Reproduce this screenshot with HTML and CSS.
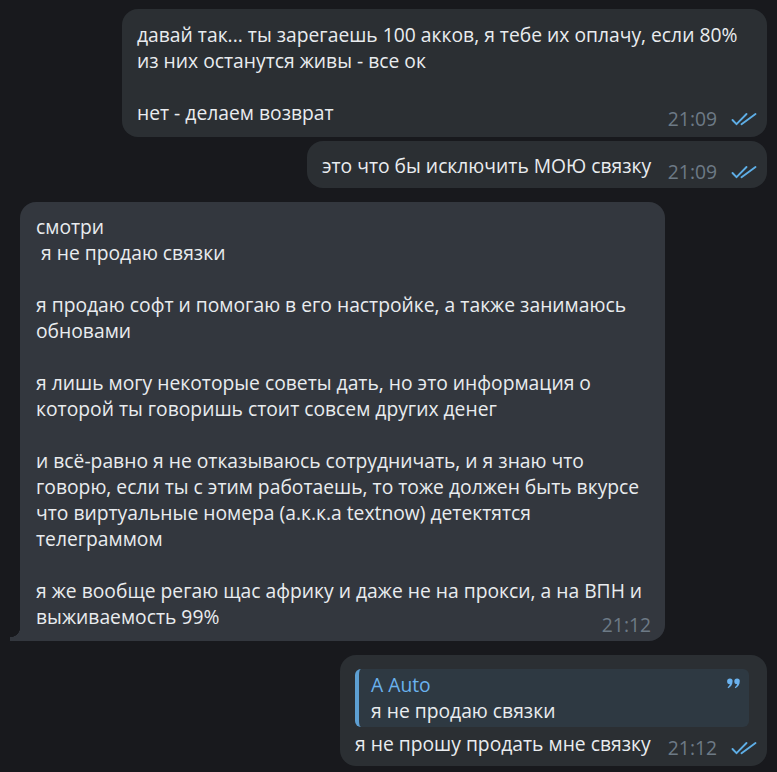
FILE: index.html
```html
<!DOCTYPE html>
<html lang="ru">
<head>
<meta charset="utf-8">
<link rel="stylesheet" href="styles.css">
</head>
<body>
<div class="chat">
  <div class="row out first">
    <div class="bubble out-bubble w1">
      <div class="text">давай так... ты зарегаешь 100 акков, я тебе их оплачу, если 80%<br>из них останутся живы - все ок<br><br>нет - делаем возврат</div>
      <div class="meta"><span class="time">21:09</span><svg class="check" viewBox="0 0 26 14" width="26" height="14"><path d="M1.5 8l4 4.2L15.5 2M10.5 12.2L24.5 2" fill="none" stroke="#5eaee6" stroke-width="1.9" stroke-linecap="round" stroke-linejoin="round"/></svg></div>
    </div>
  </div>
  <div class="row out">
    <div class="bubble out-bubble w2">
      <div class="text">это что бы исключить МОЮ связку</div>
      <div class="meta"><span class="time">21:09</span><svg class="check" viewBox="0 0 26 14" width="26" height="14"><path d="M1.5 8l4 4.2L15.5 2M10.5 12.2L24.5 2" fill="none" stroke="#5eaee6" stroke-width="1.9" stroke-linecap="round" stroke-linejoin="round"/></svg></div>
    </div>
  </div>
  <div class="row in">
    <div class="bubble in-bubble w3">
      <div class="text">смотри<br>&nbsp;я не продаю связки<br><br>я продаю софт и помогаю в его настройке, а также занимаюсь<br>обновами<br><br>я лишь могу некоторые советы дать, но это информация о<br>которой ты говоришь стоит совсем других денег<br><br>и всё-равно я не отказываюсь сотрудничать, и я знаю что<br>говорю, если ты с этим работаешь, то тоже должен быть вкурсе<br>что виртуальные номера (а.к.к.а textnow) детектятся<br>телеграммом<br><br>я же вообще регаю щас африку и даже не на прокси, а на ВПН и<br>выживаемость 99%</div>
      <div class="meta"><span class="time">21:12</span></div>
    </div>
  </div>
  <div class="row out">
    <div class="bubble out-bubble w4">
      <div class="quote">
        <div class="quote-name">A Auto</div>
        <div class="quote-text">я не продаю связки</div>
        <svg class="quote-icon" viewBox="0 0 14 12" width="14" height="12"><path d="M3 0.5a2.6 2.6 0 0 1 2.6 2.6c0 3.4-1.8 6-4.4 7.2l-0.6-1c1.3-0.8 2-1.8 2.2-3.2A2.6 2.6 0 0 1 3 0.5zM10.2 0.5a2.6 2.6 0 0 1 2.6 2.6c0 3.4-1.8 6-4.4 7.2l-0.6-1c1.3-0.8 2-1.8 2.2-3.2a2.6 2.6 0 0 1 0.2-5.6z" fill="#6ab2ee"/></svg>
      </div>
      <div class="text">я не прошу продать мне связку</div>
      <div class="meta"><span class="time">21:12</span><svg class="check" viewBox="0 0 26 14" width="26" height="14"><path d="M1.5 8l4 4.2L15.5 2M10.5 12.2L24.5 2" fill="none" stroke="#5eaee6" stroke-width="1.9" stroke-linecap="round" stroke-linejoin="round"/></svg></div>
    </div>
  </div>
</div>
</body>
</html>
```
FILE: styles.css
```css
* { box-sizing: border-box; }
html, body { margin: 0; padding: 0; }
body {
  background: #18191d;
  width: 777px;
  height: 772px;
  overflow: hidden;
  font-family: "Open Sans", "DejaVu Sans", sans-serif;
  font-size: 19.3px;
  color: #e9ecef;
}
.chat {
  display: flex;
  flex-direction: column;
  padding-top: 9px;
}
.row { display: flex; }
.row.out { justify-content: flex-end; padding-right: 10px; margin-top: 4px; }
.row.out.first { margin-top: 0; }
.row.in { justify-content: flex-start; padding-left: 20px; margin-top: 14px; }
.row.in + .row.out { margin-top: 14px; }

.bubble {
  position: relative;
  border-radius: 16px;
  line-height: 26px;
}
.out-bubble { background: #2b2f33; padding: 13px 15px 11px 15px; }
.in-bubble { background: #33373e; padding: 12px 16px 11px 16px; border-bottom-left-radius: 0; }
.in-bubble::before {
  content: "";
  position: absolute;
  left: -10px;
  bottom: 0;
  width: 10px;
  height: 14px;
  background: radial-gradient(circle at 0 0, transparent 10px, #33373e 10.5px);
}
.w1 { width: 645px; }
.w2 { width: 460px; padding-top: 12px; padding-bottom: 9px; }
.w2 .meta { bottom: 6px; }
.w3 { width: 645px; }
.w4 { width: 427px; padding-top: 14px; padding-bottom: 9px; }

.text { white-space: nowrap; }
.meta {
  position: absolute;
  right: 10px;
  bottom: 8px;
  display: flex;
  align-items: center;
  gap: 14px;
  line-height: 20px;
}
.in-bubble .meta { right: 14px; bottom: 6px; }
.time { color: #6d7a86; font-size: 19.3px; }
.check { display: block; }

.quote {
  position: relative;
  background: #2e3942;
  border-radius: 6px;
  border-left: 4px solid #5d9fd2;
  padding: 3px 30px 3px 12px;
  margin: 0 3px 4px 0;
  line-height: 26px;
}
.quote-name { color: #6ab2ee; font-weight: 500; }
.quote-text { color: #e9ecef; }
.quote-icon { position: absolute; right: 8px; top: 9px; }
```
